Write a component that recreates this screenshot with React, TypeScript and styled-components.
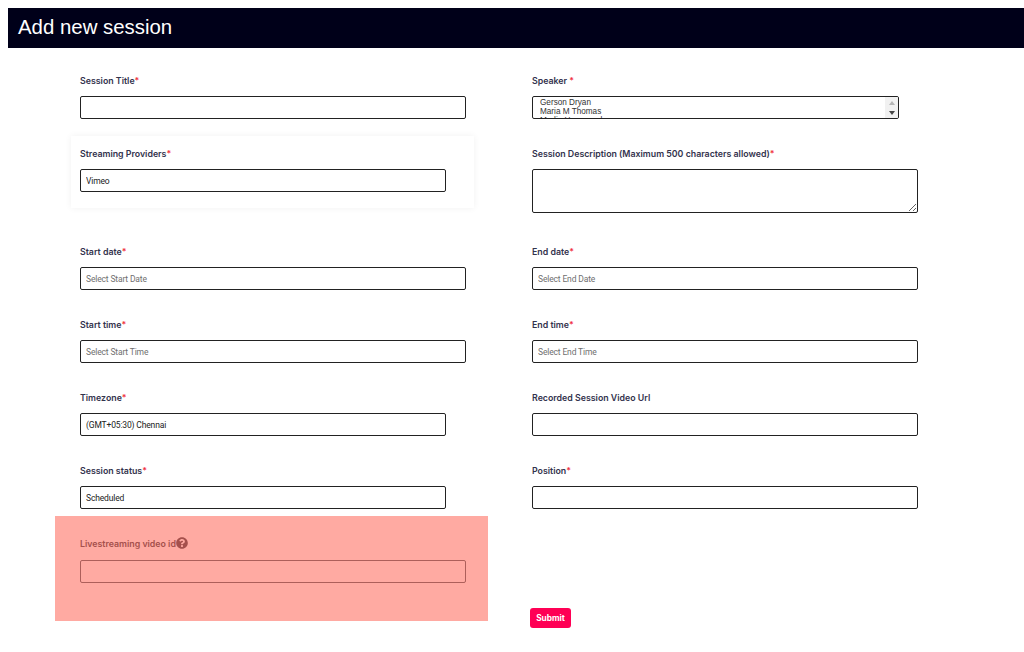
import React from 'react';
import styled, { createGlobalStyle } from 'styled-components';
import { FaQuestionCircle } from 'react-icons/fa';

const GlobalStyle = createGlobalStyle`
  body {
    margin: 8px 0 0 8px;
    background: #fff;
    font-family: Roboto, "Liberation Sans", sans-serif;
  }
`;

const Header = styled.h1`
  margin: 0;
  height: 40px;
  padding-left: 10px;
  background-color: #000019;
  color: #fff;
  font-family: "Liberation Sans", Arial, sans-serif;
  font-size: 20.4px;
  font-weight: 400;
  line-height: 38px;
`;

const FormGrid = styled.form`
  display: grid;
  grid-template-columns: 452px 1fr;
  grid-template-rows: 73px 98px 73px 73px 73px 52px 112px;
  padding: 26px 0 0 72px;
`;

const Field = styled.div`
  display: flex;
  flex-direction: column;
  align-items: flex-start;
`;

const ProviderCard = styled(Field)`
  align-self: start;
  width: 403px;
  height: 72px;
  margin: -11px 0 0 -9px;
  padding: 11px 0 0 9px;
  box-sizing: border-box;
  background: #fff;
  box-shadow: 0 0 7px rgba(0, 0, 0, 0.06);
`;

const Label = styled.label`
  display: flex;
  align-items: center;
  height: 12px;
  margin-bottom: 10px;
  color: #33334d;
  font-family: Inter, Roboto, sans-serif;
  font-size: 8.8px;
  font-weight: 600;
  white-space: nowrap;
`;

const Required = styled.span`
  color: #f0303c;
`;

const TextInput = styled.input<{ $narrow?: boolean }>`
  width: ${(p) => (p.$narrow ? '366px' : '385.5px')};
  height: 23px;
  box-sizing: border-box;
  padding: 0 5px;
  border: 1px solid #222;
  border-radius: 2px;
  background: transparent;
  color: #222;
  font-family: Roboto, sans-serif;
  font-size: 8.5px;
  letter-spacing: -0.15px;
  outline: none;

  &::placeholder {
    color: #6f6f6f;
    opacity: 1;
  }
`;

const TextArea = styled.textarea`
  width: 385.5px;
  height: 44px;
  box-sizing: border-box;
  border: 1px solid #222;
  border-radius: 2px;
  outline: none;
`;

const ListBox = styled.div`
  display: flex;
  width: 367px;
  height: 23px;
  box-sizing: border-box;
  border: 1px solid #222;
  border-radius: 2px;
  overflow: hidden;
`;

const Options = styled.div`
  flex: 1;
  padding: 1px 0 0 7px;
  color: #333;
  font-family: "Liberation Sans", Arial, sans-serif;
  font-size: 8.2px;
  line-height: 9px;
`;

const ScrollBar = styled.div`
  display: flex;
  flex-direction: column;
  align-items: center;
  justify-content: space-between;
  width: 13px;
  padding: 4px 0 3px;
  background: #f1f1f1;
`;

const Arrow = styled.span<{ $down?: boolean }>`
  width: 0;
  height: 0;
  border-left: 3.5px solid transparent;
  border-right: 3.5px solid transparent;
  border-bottom: ${(p) => (p.$down ? '0' : '4px solid #b5b5b5')};
  border-top: ${(p) => (p.$down ? '4px solid #444' : '0')};
`;

const Highlight = styled(Field)`
  align-self: start;
  width: 433px;
  height: 104.5px;
  margin-left: -25px;
  padding: 21px 0 0 25px;
  box-sizing: border-box;
  background: #ffaaa2;

  ${Label} {
    margin-bottom: 11px;
    color: #a5504c;
  }

  ${TextInput} {
    border-color: #ad5f5a;
  }
`;

const HelpIcon = styled(FaQuestionCircle)`
  width: 12px;
  height: 12px;
  color: #a5504c;
`;

const SubmitCell = styled.div`
  display: flex;
  align-items: flex-end;
  margin-left: -2px;
`;

const SubmitButton = styled.button`
  width: 41px;
  height: 20px;
  padding: 0;
  border: none;
  border-radius: 3px;
  background: #ff0055;
  color: #fff;
  font-family: Inter, Roboto, sans-serif;
  font-size: 8.3px;
  font-weight: 700;
`;

const Title: React.FC<{ text: string; required?: boolean }> = ({ text, required = true }) => (
  <Label>
    {text}
    {required && <Required>*</Required>}
  </Label>
);

const App: React.FC = () => {
  return (
    <>
      <GlobalStyle />
      <Header>Add new session</Header>
      <FormGrid>
        <Field>
          <Title text="Session Title" />
          <TextInput readOnly />
        </Field>
        <Field>
          <Label>
            Speaker&nbsp;<Required>*</Required>
          </Label>
          <ListBox>
            <Options>
              <div>Gerson Dryan</div>
              <div>Maria M Thomas</div>
              <div>Marlin Hammond</div>
            </Options>
            <ScrollBar>
              <Arrow />
              <Arrow $down />
            </ScrollBar>
          </ListBox>
        </Field>

        <ProviderCard>
          <Title text="Streaming Providers" />
          <TextInput $narrow readOnly value="Vimeo" />
        </ProviderCard>
        <Field>
          <Title text="Session Description (Maximum 500 characters allowed)" />
          <TextArea readOnly />
        </Field>

        <Field>
          <Title text="Start date" />
          <TextInput readOnly placeholder="Select Start Date" />
        </Field>
        <Field>
          <Title text="End date" />
          <TextInput readOnly placeholder="Select End Date" />
        </Field>

        <Field>
          <Title text="Start time" />
          <TextInput readOnly placeholder="Select Start Time" />
        </Field>
        <Field>
          <Title text="End time" />
          <TextInput readOnly placeholder="Select End Time" />
        </Field>

        <Field>
          <Title text="Timezone" />
          <TextInput $narrow readOnly value="(GMT+05:30) Chennai" />
        </Field>
        <Field>
          <Title text="Recorded Session Video Url" required={false} />
          <TextInput readOnly />
        </Field>

        <Field>
          <Title text="Session status" />
          <TextInput $narrow readOnly value="Scheduled" />
        </Field>
        <Field>
          <Title text="Position" />
          <TextInput readOnly />
        </Field>

        <Highlight>
          <Label>
            Livestreaming video id
            <HelpIcon />
          </Label>
          <TextInput readOnly />
        </Highlight>
        <SubmitCell>
          <SubmitButton type="button">Submit</SubmitButton>
        </SubmitCell>
      </FormGrid>
    </>
  );
};

export default App;
